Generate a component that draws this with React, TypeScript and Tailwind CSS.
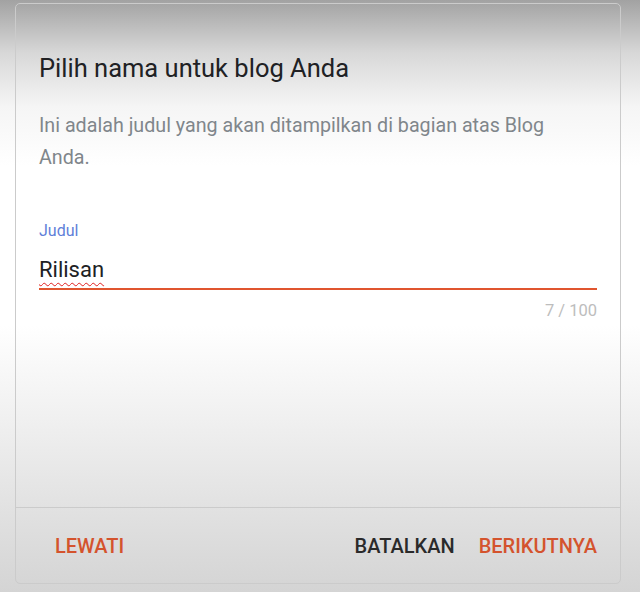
export default function App() {
  return (
    <div
      className="w-[640px] h-[592px] flex flex-col pl-[15px] pr-[19px] pt-[3px] pb-[8px] bg-[linear-gradient(180deg,#a2a2a2_0%,#d8d8d8_9%,#f5f5f5_18%,#ffffff_28%,#ffffff_55%,#ececec_75%,#d4d4d4_100%)] font-['Roboto',sans-serif]"
    >
      <div className="flex-1 flex flex-col border border-[#cbcbcb] rounded-[5px]">
        <div className="flex-1 flex flex-col px-[23px] pt-[50px]">
          <h1 className="text-[25.5px] leading-[28px] text-[#202124]">
            Pilih nama untuk blog Anda
          </h1>
          <p className="mt-[28px] pr-[24px] text-[19.7px] leading-[32px] text-[#80868b]">
            Ini adalah judul yang akan ditampilkan di bagian atas Blog Anda.
          </p>
          <label className="mt-[47px] text-[16px] leading-[20px] text-[#5f7fd9]">
            Judul
          </label>
          <div className="mt-[15px] pb-[4px] border-b-2 border-[#e0552f]">
            <span className="text-[22px] leading-[28px] text-[#202124] underline decoration-wavy decoration-[#e02020] decoration-1 underline-offset-[5px]">
              Rilisan
            </span>
          </div>
          <div className="mt-[11px] text-right text-[16.5px] leading-[20px] text-[#bdbdbd]">
            7 / 100
          </div>
        </div>
        <div className="h-[76px] flex items-center border-t border-[#cbcbcb] pl-[39px] pr-[23px] text-[20px] font-medium">
          <button className="text-[#d4532d]">LEWATI</button>
          <div className="ml-auto flex items-center gap-[24px]">
            <button className="text-[#2a2a2a]">BATALKAN</button>
            <button className="text-[#d4532d]">BERIKUTNYA</button>
          </div>
        </div>
      </div>
    </div>
  );
}
